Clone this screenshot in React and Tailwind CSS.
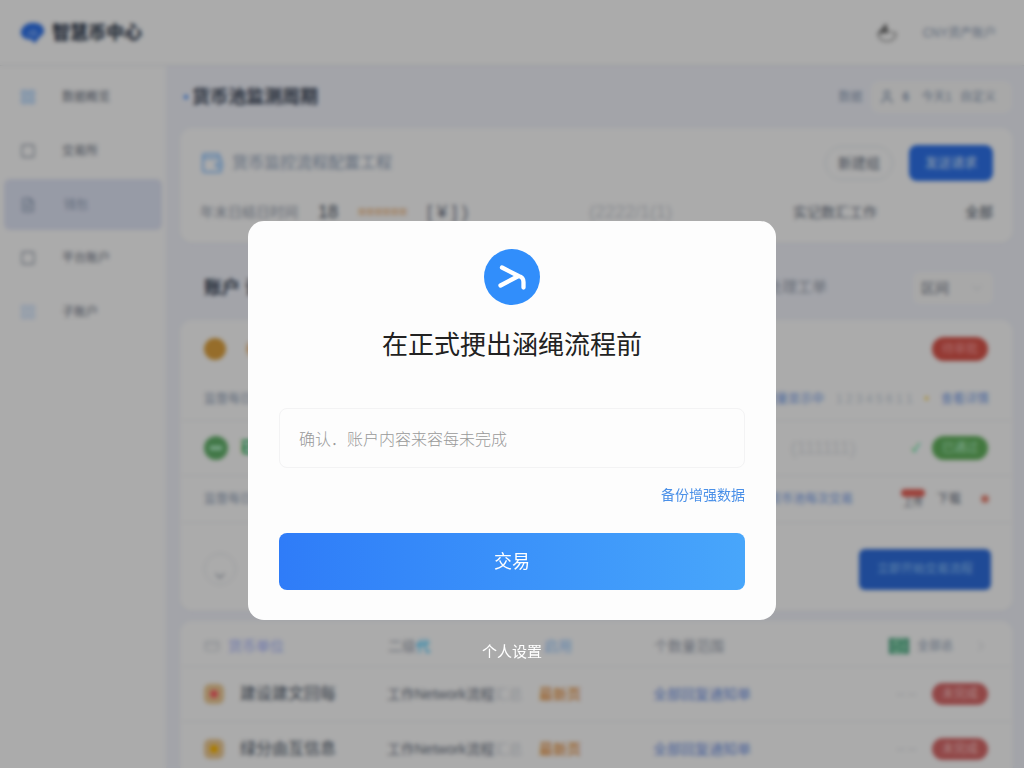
import { ChevronDown, ChevronRight, CreditCard, FileText, Image, LayoutGrid, Square, User, Wallet } from 'lucide-react'

const menu = [
  { label: '数据概览', icon: LayoutGrid, tone: 'text-blue-300' },
  { label: '交易所', icon: Square, tone: 'text-gray-400' },
  { label: '钱包', icon: FileText, tone: 'text-slate-400', active: true },
  { label: '平台账户', icon: Square, tone: 'text-gray-400' },
  { label: '子账户', icon: LayoutGrid, tone: 'text-blue-200' },
]

const records = [
  { title: '建设建文回每', dot: 'bg-red-400', badge: '未完成' },
  { title: '绿分由互信息', dot: 'bg-amber-400', badge: '未完成' },
]

const Header = () => (
  <header className="flex h-[66px] items-center justify-between border-b border-gray-200 bg-white pl-5 pr-7">
    <div className="flex items-center gap-2">
      <svg viewBox="0 0 26 24" className="h-6 w-6" aria-hidden="true">
        <path d="M1 10C3 4 8 1 14 1c7 0 12 3 12 9 0 4-4 5-6 8l-4 5-4-4C7 19 0 17 1 10Z" fill="#2f74ee" />
        <path d="M8 14c3-1 4-4 8-5m-3 7 6-5" stroke="#8fb8ff" strokeWidth="2" fill="none" />
      </svg>
      <span className="text-lg font-black text-gray-700">智慧币中心</span>
    </div>
    <div className="flex items-center gap-6">
      <svg viewBox="0 0 24 24" className="h-6 w-6" fill="none" stroke="#999" strokeWidth="1.500" aria-hidden="true">
        <path d="M3 12c0 11 18 11 18 0" />
        <path d="M2 13 11 2l3 10Z" fill="#777" stroke="none" />
        <path d="m15 11 6 1" />
      </svg>
      <a href="#account" className="text-xs text-slate-400">CNY资产账户</a>
    </div>
  </header>
)

const Sidebar = () => (
  <nav className="flex w-[166px] shrink-0 flex-col bg-white px-1 pt-1">
    {menu.map(({ label, icon: Icon, tone, active }) => (
      <a
        key={label}
        href="#menu"
        className={`flex items-center rounded-md px-4 text-xs ${
          active ? 'my-px h-[51px] gap-7 bg-[#e2e7f8] text-slate-400' : 'h-[54px] gap-[26px] text-gray-500'
        }`}
      >
        <Icon className={`h-4 w-4 ${tone}`} />
        {label}
      </a>
    ))}
  </nav>
)

const PageTitle = () => (
  <div className="flex h-[62px] items-center justify-between pl-1 pr-px">
    <div className="flex items-center gap-1">
      <span className="h-1 w-1 rounded-full bg-blue-500" />
      <h1 className="text-lg font-bold text-gray-700">货币池监测周期</h1>
    </div>
    <div className="flex items-center gap-2 text-xs text-slate-400">
      <span>数据</span>
      <div className="flex h-8 items-center gap-2 rounded-lg bg-[#fbfbfb] pl-2 pr-4">
        <User className="h-4 w-4" />
        <span className="font-bold">6</span>
        <span className="ml-1">今天1</span>
        <span>自定义</span>
      </div>
    </div>
  </div>
)

const SummaryCard = () => (
  <section className="flex flex-col gap-4 rounded-xl bg-white px-5 py-[17px] shadow-xs">
    <div className="flex items-center justify-between">
      <div className="flex items-center gap-2 text-base text-slate-400">
        <Wallet className="h-6 w-6 text-blue-300" />
        <span>货币监控流程配置工程</span>
      </div>
      <div className="flex items-center gap-4">
        <button className="h-[34px] rounded-full border border-slate-200 px-3 text-sm text-gray-500">新建组</button>
        <button className="h-[36px] rounded-lg bg-[#2f74ee] px-4 text-[13px] font-medium text-blue-200">发送请求</button>
      </div>
    </div>
    <div className="flex h-[29px] items-center justify-between text-sm text-gray-400">
      <div className="flex items-center gap-5">
        <span>年末日结日时间</span>
        <span className="text-lg font-medium text-gray-600">18</span>
        <span className="font-bold text-amber-600/60">======</span>
        <span className="text-lg text-gray-500">[ ¥ ] )</span>
      </div>
      <span className="text-lg text-gray-300">(2222/1(1)</span>
      <div className="flex items-center gap-[88px]">
        <span className="text-gray-500">实记数汇工作</span>
        <span className="text-gray-600">全部</span>
      </div>
    </div>
  </section>
)

const FilterBar = () => (
  <div className="flex h-[77px] items-center justify-between pl-6 pr-5 pt-3">
    <h2 className="text-lg font-bold text-gray-700">账户 记录</h2>
    <div className="flex items-center gap-[86px]">
      <span className="text-[15px] text-gray-400">处理工单</span>
      <div className="flex h-8 items-center gap-5 rounded-md bg-[#fbfbfb] px-2">
        <span className="text-sm text-gray-500">区间</span>
        <ChevronDown className="h-4 w-4 text-gray-200" />
      </div>
    </div>
  </div>
)

const TaskCard = () => (
  <section className="rounded-xl bg-white shadow-xs">
    <div className="flex h-[58px] items-center justify-between pl-6 pr-[25px]">
      <div className="flex items-center gap-5">
        <span className="h-[22px] w-[22px] rounded-full bg-[#e0a33f]" />
        <span className="text-sm text-amber-600">待处理</span>
      </div>
      <span className="flex h-6 w-14 items-center justify-center rounded-full bg-[#dd564c] text-xs text-red-300">待审批</span>
    </div>
    <div className="flex h-[43px] items-center justify-between border-b border-gray-100 px-6 text-xs text-slate-400">
      <span>监督每日内容</span>
      <div className="flex items-center gap-3 text-[#779fec]">
        <span>全部数据量显示中</span>
        <span className="text-slate-300">1 2 3 4 5 6 1 1</span>
        <span className="text-amber-300">•</span>
        <span>查看详情</span>
      </div>
    </div>
    <div className="flex h-[55px] items-center justify-between border-b border-gray-100 pl-6 pr-[25px]">
      <div className="flex items-center gap-3">
        <span className="flex h-6 w-6 items-center justify-center rounded-full bg-[#64b46c]">
          <span className="h-1 w-3 bg-green-200" />
        </span>
        <span className="text-base font-bold text-green-600">已完成</span>
      </div>
      <div className="flex items-center gap-3">
        <span className="mr-11 text-lg text-gray-200">(111111)</span>
        <span className="text-xs text-green-400">✓</span>
        <span className="flex h-6 w-14 items-center justify-center rounded-full bg-[#64b45f] text-xs text-green-200">已通过</span>
      </div>
    </div>
    <div className="flex h-[47px] items-center justify-between border-b border-gray-100 px-6 text-xs text-slate-400">
      <span>监督每日内容</span>
      <div className="flex items-center gap-3">
        <span className="mr-9 text-[#779fec]">货币池每次交易</span>
        <div className="flex flex-col items-center">
          <span className="h-2 w-6 rounded-sm bg-[#e9665c]" />
          <span className="text-[10px] leading-3 text-gray-500">上传</span>
        </div>
        <span className="text-gray-500">下载</span>
        <span className="ml-2 h-2 w-2 rounded-full bg-[#ee8d7e]" />
      </div>
    </div>
    <div className="flex h-[88px] items-center justify-between pl-6 pr-[22px] pt-1">
      <span className="flex h-8 w-8 items-end justify-center rounded-full border border-gray-200">
        <ChevronDown className="h-4 w-4 text-gray-400" />
      </span>
      <button className="h-[41px] w-[132px] rounded-md bg-[#2f6fe0] text-xs text-blue-300">立即开始交易流程</button>
    </div>
  </section>
)

const RecordCard = () => (
  <section className="rounded-xl bg-white shadow-xs">
    <div className="flex h-[46px] items-center border-b border-gray-100 px-6 pt-1 text-sm text-gray-400">
      <span className="flex w-[184px] items-center gap-2 text-indigo-300">
        <CreditCard className="h-4 w-4 text-gray-300" />
        货币单位
      </span>
      <span className="w-[156px]">二级<span className="text-sky-400">代</span></span>
      <span className="w-[110px] text-blue-300">启用</span>
      <span className="flex-1">个数量范围</span>
      <span className="flex items-center gap-2 text-xs text-slate-400">
        <Image className="h-4 w-5 bg-[#4fa886] text-green-200" />
        全部总
        <ChevronRight className="ml-3 h-4 w-4 text-gray-200" />
      </span>
    </div>
    {records.map(({ title, dot, badge }) => (
      <div key={title} className="flex h-[55px] items-center border-b border-gray-100 pl-6 pr-[25px] text-sm">
        <span className="flex w-9 items-center">
          <span className="flex h-5 w-5 items-center justify-center rounded-md bg-[#efcc96]">
            <span className={`h-2 w-2 rounded-full ${dot}`} />
          </span>
        </span>
        <span className="w-[147px] text-base text-gray-600">{title}</span>
        <span className="w-[152px] text-gray-500">
          工作Network流程<span className="text-gray-300">汇总</span>
        </span>
        <span className="w-[114px] font-medium text-amber-600/80">最新页</span>
        <span className="flex-1 text-[#6f93e6]">全部回复通知单</span>
        <span className="mr-4 text-xs text-gray-300">-- --</span>
        <span className="flex h-[22px] w-14 items-center justify-center rounded-full bg-[#d96a6a] text-xs text-red-200">{badge}</span>
      </div>
    ))}
  </section>
)

const Dashboard = () => (
  <div className="flex min-h-screen flex-col">
    <Header />
    <div className="flex flex-1">
      <Sidebar />
      <main className="min-w-0 flex-1 bg-[#f3f5fd] pl-[14px] pr-[11px]">
        <PageTitle />
        <SummaryCard />
        <FilterBar />
        <TaskCard />
        <div className="h-[10px]" />
        <RecordCard />
      </main>
    </div>
  </div>
)

const ConfirmDialog = () => (
  <div className="fixed inset-0 flex flex-col items-center bg-black/33 px-4 pt-[221px] backdrop-blur-[2px]">
    <form
      role="dialog"
      aria-labelledby="dialog-title"
      onSubmit={(e) => e.preventDefault()}
      className="flex w-full max-w-[528px] flex-col rounded-2xl bg-[#fdfdfd] px-[31px] pb-[30px] pt-7"
    >
      <svg viewBox="0 0 56 56" className="h-14 w-14 self-center" aria-hidden="true">
        <circle cx="28" cy="28" r="28" fill="#318efb" />
        <path
          d="M18 18.500 34.500 27 16.500 36.500M34.500 27Q39.500 28 39.500 33V38.500"
          fill="none"
          stroke="#fff"
          strokeWidth="4.300"
          strokeLinecap="round"
          strokeLinejoin="round"
        />
      </svg>
      <h2 id="dialog-title" className="mt-5 text-center text-[26px] leading-10 text-[#222]">
        在正式挭出涵绳流程前
      </h2>
      <input
        type="text"
        aria-label="账户内容"
        placeholder="确认．账户内容来容每未完成"
        className="mt-[43px] h-[60px] rounded-lg border border-[#f3f3f4] bg-transparent px-[19px] pt-1 text-base font-light text-gray-700 outline-none placeholder:text-[#999]"
      />
      <a href="#backup" className="mt-4 self-end text-sm leading-[22px] text-[#4a90e8]">
        备份增强数据
      </a>
      <button
        type="submit"
        className="mt-[27px] h-[57px] rounded-lg bg-linear-to-r from-[#2f7cf8] to-[#48a6fb] text-lg text-white"
      >
        交易
      </button>
    </form>
    <a href="#settings" className="mt-5 text-[15px] leading-6 text-white">
      个人设置
    </a>
  </div>
)

const App = () => (
  <div className="h-screen overflow-hidden font-['Liberation_Sans','Noto_Sans_CJK_SC',sans-serif]">
    <Dashboard />
    <ConfirmDialog />
  </div>
)

export default App
